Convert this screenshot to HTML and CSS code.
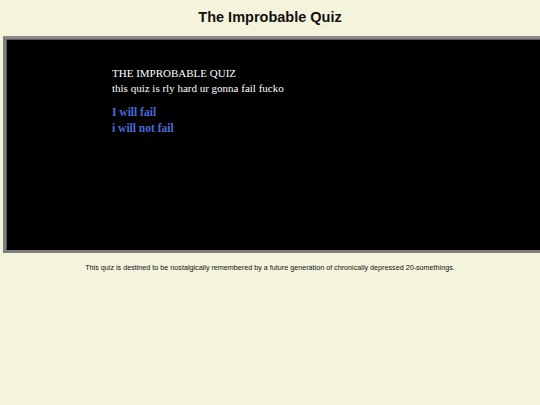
FILE: index.html
```html
<!DOCTYPE html>
<html>
<head>
<meta charset="utf-8">
<link rel="stylesheet" href="styles.css">
</head>
<body>
<h1 class="title">The Improbable Quiz</h1>
<div class="stage">
  <div class="quiz">
    <div class="q-title">THE IMPROBABLE QUIZ</div>
    <div class="q-text">this quiz is rly hard ur gonna fail fucko</div>
    <div class="answers">
      <a class="answer">I will fail</a>
      <a class="answer">i will not fail</a>
    </div>
  </div>
</div>
<p class="footer">This quiz is destined to be nostalgically remembered by a future generation of chronically depressed 20-somethings.</p>
</body>
</html>
```

FILE: styles.css
```css
html, body {
  margin: 0;
  padding: 0;
  background: #f4f4dc;
  overflow: hidden;
  width: 540px;
  height: 405px;
}
.title {
  margin: 0;
  padding-top: 9px;
  height: 27px;
  text-align: center;
  font-family: "Comic Sans MS", "Liberation Sans", sans-serif;
  font-size: 14.5px;
  font-weight: bold;
  color: #111;
}
.stage {
  margin-left: 3px;
  width: 540px;
  height: 211px;
  background: #000;
  border: 3px solid #7d7d7d;
  border-top-color: #8a8a8a;
  box-shadow: inset 1px 1px 0 #5a5a5a;
}
.quiz {
  padding: 27px 0 0 106px;
  font-family: "Liberation Serif", "DejaVu Serif", serif;
  font-size: 11px;
  color: #fff;
  line-height: 15px;
}
.answers {
  margin-top: 8px;
  display: flex;
  flex-direction: column;
}
.answer {
  color: #4a6ad8;
  font-weight: bold;
  font-size: 11.5px;
  line-height: 16px;
}
.footer {
  margin: 10px 0 0;
  text-align: center;
  font-family: "Comic Sans MS", "Liberation Sans", sans-serif;
  font-size: 7.2px;
  color: #111;
}
```
